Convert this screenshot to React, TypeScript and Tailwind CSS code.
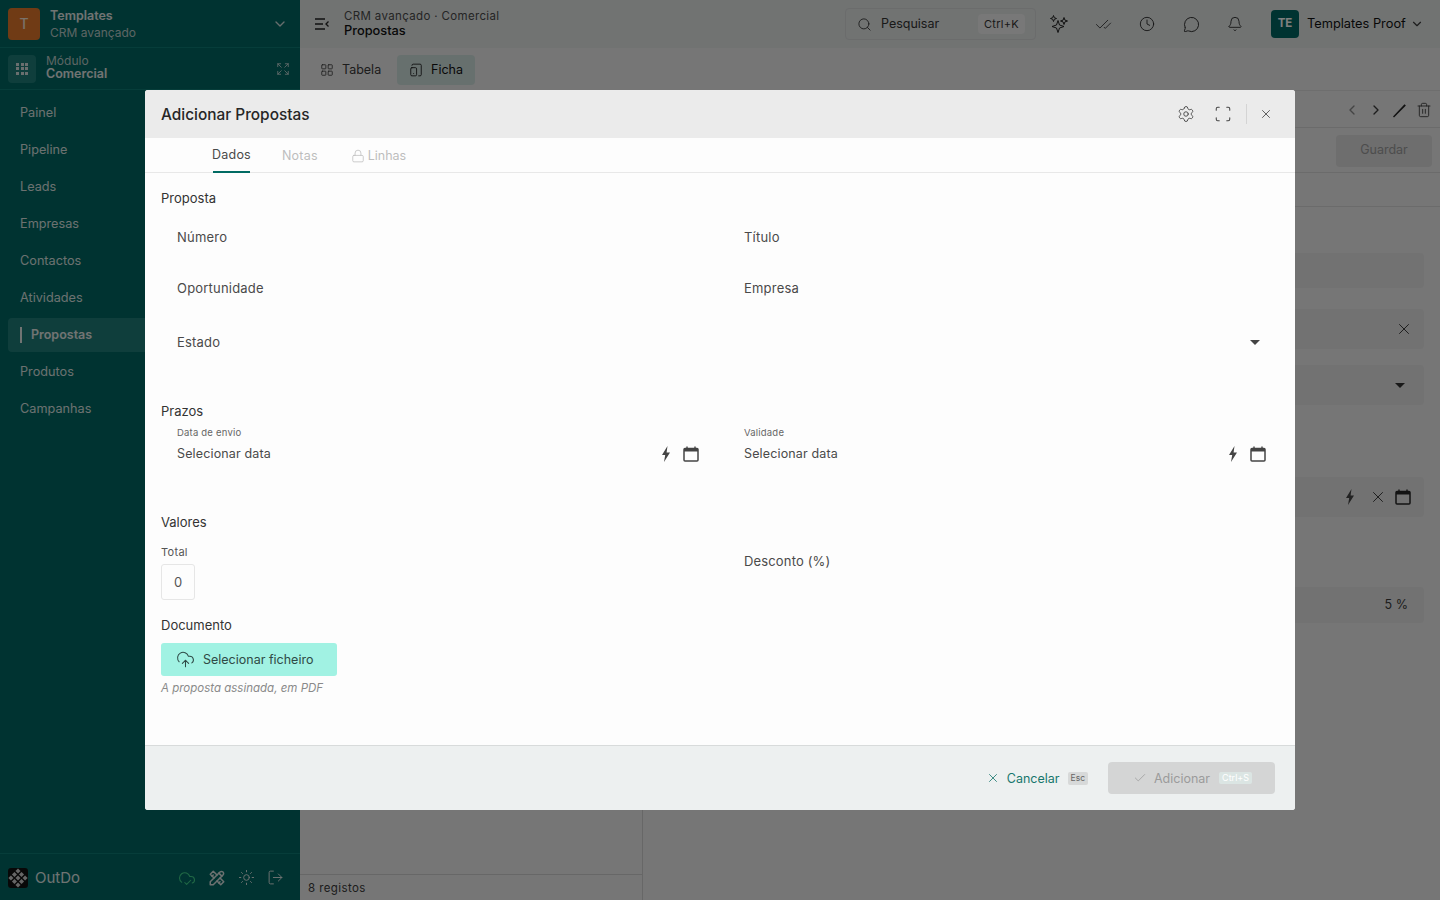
import React from "react";
import {
  Search, CheckCheck, Clock, MessageCircle, Bell, ChevronDown, ChevronLeft, ChevronRight,
  LayoutGrid, TabletSmartphone, Settings, X, Lock, CloudUpload, Check, CloudCheck,
  Sun, Trash2, Scan, LogOut, Expand,
} from "lucide-react";
import { TbTools } from "react-icons/tb";

const menu = ["Painel", "Pipeline", "Leads", "Empresas", "Contactos", "Atividades", "Propostas", "Produtos", "Campanhas"];

const Bolt = () => (
  <svg viewBox="0 0 10 16" className="w-[10px] h-[16px] fill-[#444]">
    <path d="M6.5 0 1 9h3.2L3 16l6-9.5H5.6L6.5 0z" />
  </svg>
);

const Cal = ({ dark = false }: { dark?: boolean }) => (
  <svg viewBox="0 0 16 16" className={dark ? "w-[16px] h-[16px] text-[#262626]" : "w-[16px] h-[16px] text-[#444]"} fill="none" stroke="currentColor">
    <rect x="1" y="2.5" width="14" height="12.5" rx="1" strokeWidth="1.5" />
    <path d="M1 4.2h14" strokeWidth="2.6" />
    <path d="M4 0.5v2M12 0.5v2" strokeWidth="1.4" />
  </svg>
);

const Caret = ({ dark = false }: { dark?: boolean }) => (
  <span className={dark ? "w-0 h-0 border-x-[5px] border-x-transparent border-t-[5px] border-t-[#333]" : "w-0 h-0 mb-[1px] border-x-[5px] border-x-transparent border-t-[5px] border-t-[#444]"} />
);

// tres estrelas do assistente
const Stars = () => (
  <svg viewBox="0 0 18 18" className="w-[18px] h-[18px]" fill="none" stroke="currentColor" strokeWidth="1" strokeLinejoin="round">
    <path d="M8 5.5 9.5 10 14 11.5 9.5 13 8 17.5 6.5 13 2 11.5 6.5 10z" />
    <path d="M3.5 0.5 4.3 2.7 6.5 3.5 4.3 4.3 3.5 6.5 2.7 4.3 0.5 3.5 2.7 2.7z" />
    <path d="M14 2.5 14.9 5.1 17.5 6 14.9 6.9 14 9.5 13.1 6.9 10.5 6 13.1 5.1z" />
  </svg>
);

const Logo = () => (
  <svg viewBox="0 0 20 20" className="w-5 h-5">
    <rect width="20" height="20" rx="3" fill="#111" />
    <g transform="rotate(45 10 10)" fill="#ccc">
      {[3.2, 8.2, 13.2].map((x) =>
        [3.2, 8.2, 13.2].map((y) => <rect key={`${x}-${y}`} x={x} y={y} width="3.6" height="3.6" />)
      )}
    </g>
  </svg>
);

const TopIcon = ({ children }: { children: React.ReactNode }) => (
  <span className="w-[18px] flex justify-center">{children}</span>
);

const Sidebar = () => (
  <aside className="w-[300px] shrink-0 h-full bg-[#016762] flex flex-col text-[#fff]">
    <div className="h-[48px] flex items-center pl-2 pr-[12px] border-b border-[#0c7a74]">
      <div className="w-8 h-8 rounded bg-[#e0772a] flex items-center justify-center text-sm font-medium text-[#f4e3d3]">T</div>
      <div className="ml-[10px] flex-1 leading-none">
        <div className="text-[12.5px] font-semibold leading-[18px] text-[#e2e8e7]">Templates</div>
        <div className="text-[12px] leading-[16px] text-[#b9cbc9]">CRM avançado</div>
      </div>
      <ChevronDown size={16} className="text-[#cfdcdb]" />
    </div>
    <div className="h-[42px] flex items-center pl-2 pr-[10px] border-b border-[#0c7a74]">
      <div className="w-7 h-7 rounded bg-[#1f7d78] flex items-center justify-center">
        <div className="grid grid-cols-3 gap-[1.5px]">
          {Array.from({ length: 9 }).map((_, i) => (
            <span key={i} className="w-[3px] h-[3px] bg-[#d5dfde]" />
          ))}
        </div>
      </div>
      <div className="ml-[10px] flex-1 -mt-[2px]">
        <div className="text-[12px] leading-[12px] text-[#b9cbc9]">Módulo</div>
        <div className="text-[12.5px] leading-[14px] font-semibold text-[#e2e8e7]">Comercial</div>
      </div>
      <Expand size={14} strokeWidth={1.4} className="text-[#cfdcdb]" />
    </div>
    <nav className="flex-1 pt-[3px] px-2">
      {menu.map((m) => (
        <div
          key={m}
          className={
            m === "Propostas"
              ? "h-[34px] mt-[3px] flex items-center rounded bg-[#1f7d78] pl-3 text-[12.5px] font-semibold text-[#e2e8e7]"
              : "h-[34px] mt-[3px] flex items-center pl-3 text-[12.7px] text-[#d8e2e1]"
          }
        >
          {m === "Propostas" && <span className="w-[2px] h-[16px] bg-[#e2e8e7] mr-[9px]" />}
          {m}
        </div>
      ))}
    </nav>
    <div className="h-[47px] border-t border-[#0c7a74] flex items-center pl-2 pr-4 pt-[1px]">
      <Logo />
      <span className="ml-[7px] pt-[2px] flex-1 text-[15px] text-[#dfe6e5]">OutDo</span>
      <div className="flex items-center gap-[12px] text-[#d8e2e1]">
        <CloudCheck size={18} strokeWidth={1.4} className="text-[#3fd08a]" />
        <TbTools size={18} />
        <Sun size={17} strokeWidth={1.4} />
        <LogOut size={17} strokeWidth={1.4} />
      </div>
    </div>
  </aside>
);

const Main = () => (
  <main className="flex-1 h-full bg-[#ececec] flex flex-col text-[#3a3a3a]">
    <header className="h-[48px] bg-[#e2e6e5] flex items-center pl-[14px] pr-[16px]">
      <svg viewBox="0 0 16 14" className="w-4 h-[14px]" fill="none" stroke="#222" strokeWidth="1.3">
        <path d="M1 2h10M1 7h8M1 12h10M14.5 4.5 12 7l2.5 2.5" />
      </svg>
      <div className="ml-[14px] flex-1">
        <div className="text-[11.5px] leading-[14px] text-[#4a4a4a] tracking-[0.35px]">CRM avançado · Comercial</div>
        <div className="text-[12.8px] leading-[16px] font-medium text-[#111]">Propostas</div>
      </div>
      <div className="w-[191px] h-8 rounded border border-[#d6d9d8] flex items-center pl-[11px] pr-[10px] text-[12.5px] text-[#333] mr-[14px]">
        <Search size={15} strokeWidth={1.4} />
        <span className="ml-[9px] flex-1">Pesquisar</span>
        <span className="bg-[#f0f0f0] rounded px-[6px] text-[11px] leading-[20px] tracking-[0.3px]">Ctrl+K</span>
      </div>
      <div className="flex items-center gap-[26px] text-[#222]">
        <TopIcon><Stars /></TopIcon>
        <TopIcon><CheckCheck size={17} strokeWidth={1.1} /></TopIcon>
        <TopIcon><Clock size={16} strokeWidth={1.3} /></TopIcon>
        <TopIcon><MessageCircle size={17} strokeWidth={1.3} /></TopIcon>
        <TopIcon><Bell size={16} strokeWidth={1.3} /></TopIcon>
      </div>
      <div className="ml-[27px] w-[28px] h-[28px] rounded bg-[#016762] flex items-center justify-center text-[11.5px] font-bold text-white">TE</div>
      <span className="ml-2 w-[103px] text-[12.8px] text-[#111]">Templates Proof</span>
      <ChevronDown size={14} />
    </header>
    <div className="h-[43px] pt-[1px] flex items-center px-[8px] border-b border-[#dcdcdc]">
      <div className="h-[30px] w-[83px] flex items-center gap-[8px] pl-[12px] text-[12.5px]">
        <LayoutGrid size={14} strokeWidth={1.4} /> <span className="pt-[2px]">Tabela</span>
      </div>
      <div className="ml-[6px] h-[30px] w-[78px] flex items-center gap-[8px] pl-[12px] rounded bg-[#cfe0dd] text-[12.5px] text-[#111]">
        <TabletSmartphone size={14} strokeWidth={1.4} /> <span className="pt-[2px]">Ficha</span>
      </div>
    </div>
    <div className="flex-1 flex min-h-0">
      <div className="w-[343px] border-r border-[#cfcfcf] flex flex-col justify-end">
        <div className="h-[26px] border-t border-[#cfcfcf] flex items-center pl-2 pt-[2px] text-[11.5px] tracking-[0.4px]">8 registos</div>
      </div>
      <div className="flex-1">
        <div className="h-[37px] pt-[2px] border-b border-[#d6d6d6] flex items-center justify-end gap-[8px] pr-2">
          <ChevronLeft size={16} className="text-[#888]" />
          <ChevronRight size={16} />
          <svg viewBox="0 0 16 16" className="w-4 h-4" fill="#222"><path d="M1 14.5 12.5 2.2l1.4 1.2L2 15.5z" /></svg>
          <Trash2 size={16} strokeWidth={1.3} />
        </div>
        <div className="h-[45px] pt-[1px] border-b border-[#d6d6d6] flex items-center justify-end pr-2">
          <div className="w-[96px] h-8 rounded bg-[#dcdcdc] flex items-center justify-center text-[12.5px] text-[#9a9a9a]">Guardar</div>
        </div>
        <div className="h-[34px] border-b border-[#d6d6d6]" />
        <div className="pr-4 pt-[46px] flex flex-col">
          <div className="h-[35px] rounded bg-[#e5e5e5]" />
          <div className="h-[40px] mt-[21px] rounded bg-[#e5e5e5] flex items-center justify-end pr-[11px]"><X size={18} strokeWidth={1.3} /></div>
          <div className="h-[40px] mt-[16px] rounded bg-[#e5e5e5] flex items-center justify-end pr-[19px]"><Caret dark /></div>
          <div className="h-[40px] mt-[72px] rounded bg-[#e5e5e5] flex items-center justify-end pr-[13px]"><Bolt /><span className="ml-[14px]"><X size={18} strokeWidth={1.3} /></span><span className="ml-[8px]"><Cal dark /></span></div>
          <div className="h-[36px] mt-[70px] pt-[1px] rounded bg-[#e5e5e5] flex items-center justify-end pr-[16px] text-[12.5px]">5 %</div>
        </div>
      </div>
    </div>
  </main>
);

const FieldRow = ({ left, right, className }: { left: string; right: string; className: string }) => (
  <div className={`grid grid-cols-2 gap-x-4 text-[13px] text-[#4a4a4a] tracking-[0.2px] ${className}`}>
    <div className="pl-4">{left}</div>
    <div className="pl-4">{right}</div>
  </div>
);

const DateField = ({ label }: { label: string }) => (
  <div className="pl-4 pr-[13px]">
    <div className="text-[9.5px] leading-[12px] text-[#666] tracking-[0.2px]">{label}</div>
    <div className="mt-[5px] h-[20px] flex items-center text-[12.5px] text-[#4a4a4a] tracking-[0.15px]">
      <span className="flex-1">Selecionar data</span>
      <span className="mb-[1px] flex"><Bolt /></span>
      <span className="ml-[12px] mb-[1px] flex"><Cal /></span>
    </div>
  </div>
);

const Modal = () => (
  <div className="absolute left-[145px] top-[90px] w-[1150px] h-[720px] rounded-[3px] bg-[#fdfdfd] flex flex-col overflow-hidden">
    <div className="h-[48px] shrink-0 bg-[#ebebeb] flex items-center pl-4 pr-[22px]">
      <h2 className="flex-1 pt-[2px] text-[15.4px] font-medium text-[#262626]">Adicionar Propostas</h2>
      <Settings size={18} className="text-[#444]" strokeWidth={1.2} />
      <Scan size={18} className="ml-[19px] text-[#444]" strokeWidth={1.4} />
      <span className="ml-[14px] w-px h-5 bg-[#d4d4d4]" />
      <X size={14} className="ml-[12px] text-[#333]" strokeWidth={1.3} />
    </div>
    <div className="h-[35px] shrink-0 border-b border-[#e8e8e8] flex pl-[68px] text-[12.5px] tracking-[0.2px]">
      <div className="h-[35px] w-[37px] pt-[2px] flex items-center justify-center border-b-2 border-[#016b63] text-[#4a4a4a]">Dados</div>
      <div className="ml-[32px] pt-[2px] flex items-center text-[#bdbdbd]">Notas</div>
      <div className="ml-[33px] pt-[2px] flex items-center gap-[3px] text-[#bdbdbd] tracking-normal"><Lock size={14} strokeWidth={1.3} />Linhas</div>
    </div>
    <div className="flex-1 px-4 pt-[17px]">
      <div className="text-[13px] leading-[16px] text-[#333]">Proposta</div>
      <FieldRow left="Número" right="Título" className="mt-[23px] leading-[16px]" />
      <FieldRow left="Oportunidade" right="Empresa" className="mt-[35px] leading-[16px]" />
      <div className="mt-[39px] h-[16px] pl-4 pr-[19px] flex items-center justify-between text-[13px] text-[#4a4a4a] tracking-[0.2px]">
        Estado <Caret />
      </div>
      <div className="mt-[52px] text-[13px] leading-[16px] text-[#333]">Prazos</div>
      <div className="mt-[8px] grid grid-cols-2 gap-x-4">
        <DateField label="Data de envio" />
        <DateField label="Validade" />
      </div>
      <div className="mt-[50px] text-[13px] leading-[16px] text-[#333]">Valores</div>
      <div className="mt-[15px] grid grid-cols-2 gap-x-4">
        <div>
          <div className="text-[11px] leading-[14px] text-[#555] tracking-[0.3px]">Total</div>
          <div className="mt-[5px] w-[34px] h-[36px] pt-[1px] rounded-[3px] border border-[#e6e6e6] flex items-center justify-center text-[13px] text-[#555]">0</div>
        </div>
        <div className="pl-4 pt-[8px] text-[13px] leading-[16px] text-[#4a4a4a] tracking-[0.15px]">Desconto (%)</div>
      </div>
      <div className="mt-[17px] text-[13px] leading-[16px] text-[#333]">Documento</div>
      <div className="mt-[10px] w-[176px] h-[33px] rounded-[3px] bg-[#a1f2e3] flex items-center pl-[15px] text-[12.5px] text-[#2f4a46]">
        <CloudUpload size={19} strokeWidth={1.3} />
        <span className="ml-[8px] pt-[2px]">Selecionar ficheiro</span>
      </div>
      <div className="mt-[5px] text-[11.5px] leading-[14px] italic text-[#8a8a8a]">A proposta assinada, em PDF</div>
    </div>
    <div className="h-[65px] shrink-0 bg-[#edf0f0] border-t border-[#d8dbdb] flex items-center justify-end pr-[20px]">
      <X size={14} strokeWidth={1.4} className="text-[#17776d]" />
      <span className="ml-[7px] pt-[2px] text-[12.5px] text-[#17776d]">Cancelar</span>
      <span className="ml-[8px] px-[3px] rounded-[2px] bg-[#d7d9d9] text-[8.5px] leading-[13px] text-[#666]">Esc</span>
      <div className="ml-[20px] w-[167px] h-8 rounded bg-[#d4d5d5] flex items-center pl-[25px] text-[12.5px] text-[#9b9b9b]">
        <Check size={14} strokeWidth={1.3} />
        <span className="ml-[7px] pt-[2px]">Adicionar</span>
        <span className="ml-[9px] bg-[#dbe5e3] px-[3px] rounded-[2px] text-[9px] leading-[12px] text-[#fff]">Ctrl+S</span>
      </div>
    </div>
  </div>
);

export default function App() {
  return (
    <div className="relative w-[1440px] h-[900px] overflow-hidden font-['Inter','Noto_Sans',sans-serif]">
      <div className="flex h-full">
        <Sidebar />
        <Main />
      </div>
      <div className="absolute inset-0 bg-black/50" />
      <Modal />
    </div>
  );
}
